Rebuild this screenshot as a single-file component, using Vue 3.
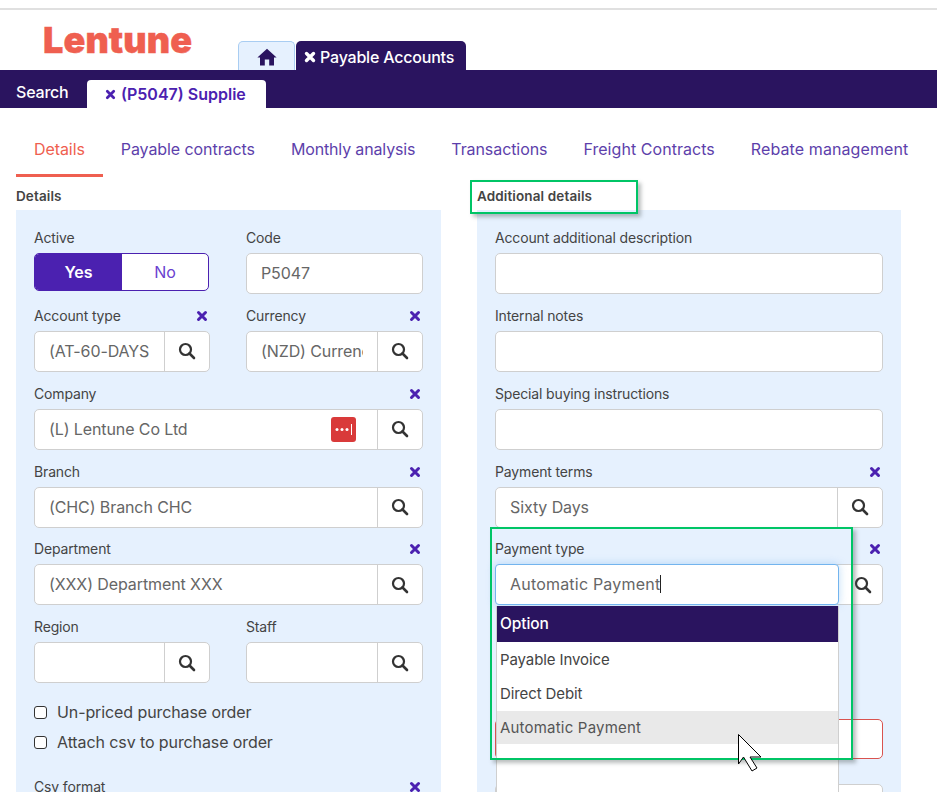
<script setup>
const navTabs = ['Details', 'Payable contracts', 'Monthly analysis', 'Transactions', 'Freight Contracts', 'Rebate management']
const rightRows = [
  { label: 'Account additional description' },
  { label: 'Internal notes' },
  { label: 'Special buying instructions' }
]
</script>

<template>
  <div class="page">
    <div class="topline"></div>
    <header class="brand">
      <div class="logo">Lentune</div>
      <div class="apptabs">
        <div class="hometab">
          <svg width="20" height="18" viewBox="0 0 20 18"><path fill="#2a145f" d="M10 .8 19.6 9.6H17V17.4H12.2V11.6H7.8V17.4H3V9.6H.4Z"/></svg>
        </div>
        <div class="apptab">
          <svg class="x" width="12" height="12" viewBox="0 0 12 12"><path d="M2.500 2.500 9.500 9.500M9.500 2.500 2.500 9.500" stroke="#fff" stroke-width="3.400" stroke-linecap="round"/></svg>
          <span>Payable Accounts</span>
        </div>
      </div>
    </header>
    <div class="subbar">
      <div class="search">Search</div>
      <div class="subtab">
        <svg class="x" width="11" height="11" viewBox="0 0 12 12"><path d="M2.500 2.500 9.500 9.500M9.500 2.500 2.500 9.500" stroke="#4b21b0" stroke-width="3" stroke-linecap="round"/></svg>
        <span>(P5047) Supplie</span>
      </div>
    </div>
    <nav class="nav">
      <div v-for="(t, i) in navTabs" :key="t" class="navitem" :class="{ on: i === 0 }">{{ t }}</div>
    </nav>

    <div class="cols">
      <section class="col">
        <h3 class="heading">Details</h3>
        <div class="panel">
          <div class="two">
            <div class="field">
              <div class="label">Active</div>
              <div class="toggle"><div class="yes">Yes</div><div class="no">No</div></div>
            </div>
            <div class="field">
              <div class="label">Code</div>
              <div class="grp"><div class="val">P5047</div></div>
            </div>
            <div class="field">
              <div class="label"><span>Account type</span><svg class="clr" width="12" height="12" viewBox="0 0 12 12"><path d="M2.500 2.500 9.500 9.500M9.500 2.500 2.500 9.500" stroke="#4b21b0" stroke-width="3" stroke-linecap="round"/></svg></div>
              <div class="grp"><div class="val">(AT-60-DAYS Days</div><div class="btn"><svg width="18" height="18" viewBox="0 0 18 18"><circle cx="7.500" cy="7.500" r="5.500" fill="none" stroke="#333" stroke-width="2.200"/><path d="M11.500 11.500 16 16" stroke="#333" stroke-width="2.600" stroke-linecap="round"/></svg></div></div>
            </div>
            <div class="field">
              <div class="label"><span>Currency</span><svg class="clr" width="12" height="12" viewBox="0 0 12 12"><path d="M2.500 2.500 9.500 9.500M9.500 2.500 2.500 9.500" stroke="#4b21b0" stroke-width="3" stroke-linecap="round"/></svg></div>
              <div class="grp"><div class="val">(NZD) Currency</div><div class="btn"><svg width="18" height="18" viewBox="0 0 18 18"><circle cx="7.500" cy="7.500" r="5.500" fill="none" stroke="#333" stroke-width="2.200"/><path d="M11.500 11.500 16 16" stroke="#333" stroke-width="2.600" stroke-linecap="round"/></svg></div></div>
            </div>
          </div>
          <div class="field">
            <div class="label"><span>Company</span><svg class="clr" width="12" height="12" viewBox="0 0 12 12"><path d="M2.500 2.500 9.500 9.500M9.500 2.500 2.500 9.500" stroke="#4b21b0" stroke-width="3" stroke-linecap="round"/></svg></div>
            <div class="grp">
              <div class="val">(L) Lentune Co Ltd</div>
              <svg class="pm" width="25" height="25" viewBox="0 0 25 25"><rect width="25" height="25" rx="3" fill="#d93a3a"/><circle cx="6" cy="12.500" r="1.500" fill="#fff"/><circle cx="11" cy="12.500" r="1.500" fill="#fff"/><circle cx="16" cy="12.500" r="1.500" fill="#fff"/><rect x="20" y="7" width="1" height="11" fill="#fff"/></svg>
              <div class="btn"><svg width="18" height="18" viewBox="0 0 18 18"><circle cx="7.500" cy="7.500" r="5.500" fill="none" stroke="#333" stroke-width="2.200"/><path d="M11.500 11.500 16 16" stroke="#333" stroke-width="2.600" stroke-linecap="round"/></svg></div>
            </div>
          </div>
          <div class="field">
            <div class="label"><span>Branch</span><svg class="clr" width="12" height="12" viewBox="0 0 12 12"><path d="M2.500 2.500 9.500 9.500M9.500 2.500 2.500 9.500" stroke="#4b21b0" stroke-width="3" stroke-linecap="round"/></svg></div>
            <div class="grp"><div class="val">(CHC) Branch CHC</div><div class="btn"><svg width="18" height="18" viewBox="0 0 18 18"><circle cx="7.500" cy="7.500" r="5.500" fill="none" stroke="#333" stroke-width="2.200"/><path d="M11.500 11.500 16 16" stroke="#333" stroke-width="2.600" stroke-linecap="round"/></svg></div></div>
          </div>
          <div class="field">
            <div class="label"><span>Department</span><svg class="clr" width="12" height="12" viewBox="0 0 12 12"><path d="M2.500 2.500 9.500 9.500M9.500 2.500 2.500 9.500" stroke="#4b21b0" stroke-width="3" stroke-linecap="round"/></svg></div>
            <div class="grp"><div class="val">(XXX) Department XXX</div><div class="btn"><svg width="18" height="18" viewBox="0 0 18 18"><circle cx="7.500" cy="7.500" r="5.500" fill="none" stroke="#333" stroke-width="2.200"/><path d="M11.500 11.500 16 16" stroke="#333" stroke-width="2.600" stroke-linecap="round"/></svg></div></div>
          </div>
          <div class="two">
            <div class="field">
              <div class="label">Region</div>
              <div class="grp"><div class="val"></div><div class="btn"><svg width="18" height="18" viewBox="0 0 18 18"><circle cx="7.500" cy="7.500" r="5.500" fill="none" stroke="#333" stroke-width="2.200"/><path d="M11.500 11.500 16 16" stroke="#333" stroke-width="2.600" stroke-linecap="round"/></svg></div></div>
            </div>
            <div class="field">
              <div class="label">Staff</div>
              <div class="grp"><div class="val"></div><div class="btn"><svg width="18" height="18" viewBox="0 0 18 18"><circle cx="7.500" cy="7.500" r="5.500" fill="none" stroke="#333" stroke-width="2.200"/><path d="M11.500 11.500 16 16" stroke="#333" stroke-width="2.600" stroke-linecap="round"/></svg></div></div>
            </div>
          </div>
          <div class="check"><span class="box"></span>Un-priced purchase order</div>
          <div class="check"><span class="box"></span>Attach csv to purchase order</div>
          <div class="field csv">
            <div class="label"><span>Csv format</span><svg class="clr" width="12" height="12" viewBox="0 0 12 12"><path d="M2.500 2.500 9.500 9.500M9.500 2.500 2.500 9.500" stroke="#4b21b0" stroke-width="3" stroke-linecap="round"/></svg></div>
          </div>
        </div>
      </section>

      <section class="col">
        <h3 class="heading">Additional details</h3>
        <div class="panel">
          <div v-for="r in rightRows" :key="r.label" class="field">
            <div class="label">{{ r.label }}</div>
            <div class="grp"><div class="val"></div></div>
          </div>
          <div class="field">
            <div class="label"><span>Payment terms</span><svg class="clr" width="12" height="12" viewBox="0 0 12 12"><path d="M2.500 2.500 9.500 9.500M9.500 2.500 2.500 9.500" stroke="#4b21b0" stroke-width="3" stroke-linecap="round"/></svg></div>
            <div class="grp"><div class="val">Sixty Days</div><div class="btn"><svg width="18" height="18" viewBox="0 0 18 18"><circle cx="7.500" cy="7.500" r="5.500" fill="none" stroke="#333" stroke-width="2.200"/><path d="M11.500 11.500 16 16" stroke="#333" stroke-width="2.600" stroke-linecap="round"/></svg></div></div>
          </div>
          <div class="field paytype">
            <div class="label"><span>Payment type</span><svg class="clr" width="12" height="12" viewBox="0 0 12 12"><path d="M2.500 2.500 9.500 9.500M9.500 2.500 2.500 9.500" stroke="#4b21b0" stroke-width="3" stroke-linecap="round"/></svg></div>
            <div class="grp">
              <div class="val focus">Automatic Payment<i class="caret"></i></div>
              <div class="btn plain"><svg width="18" height="18" viewBox="0 0 18 18"><circle cx="7.500" cy="7.500" r="5.500" fill="none" stroke="#333" stroke-width="2.200"/><path d="M11.500 11.500 16 16" stroke="#333" stroke-width="2.600" stroke-linecap="round"/></svg></div>
              <div class="menu">
                <div class="mhead">Option</div>
                <div class="mitem">Payable Invoice</div>
                <div class="mitem">Direct Debit</div>
                <div class="mitem hover">Automatic Payment</div>
              </div>
            </div>
          </div>
          <div class="grp red"><div class="val"></div></div>
          <div class="grp after"><div class="val"></div></div>
        </div>
      </section>
    </div>

    <div class="mark m1"></div>
    <div class="mark m2"></div>
    <svg class="cursor" width="26" height="40" viewBox="0 0 26 40"><path d="M.5.500V30L5.500 23 14 37 19 34 12 23H23Z" fill="#fff" stroke="#000" stroke-width="1"/></svg>
  </div>
</template>

<style>
html, body { margin: 0; overflow: hidden; background: #fff; }
</style>

<style scoped>
.page {
  position: relative;
  width: 937px;
  height: 792px;
  overflow: hidden;
  background: #fff;
  font-family: Inter, "Noto Sans", sans-serif;
  font-size: 16px;
  color: #444;
}
.topline { height: 2px; margin-top: 8px; background: #e0e0e0; }
.brand { display: flex; height: 60px; }
.logo {
  width: 238px;
  box-sizing: border-box;
  padding: 12px 0 0 43px;
  font-weight: 900;
  font-size: 36px;
  line-height: 36px;
  letter-spacing: 0.1px;
  color: #ef5f50;
  -webkit-text-stroke: 0.4px #ef5f50;
}
.apptabs { display: flex; align-items: flex-end; gap: 1px; }
.hometab {
  box-sizing: border-box;
  width: 57px;
  height: 29px;
  display: flex;
  align-items: center;
  justify-content: center;
  padding-top: 2px;
  background: #e6f1fe;
  border: 1px solid #a9cdf2;
  border-bottom: 0;
  border-radius: 5px 5px 0 0;
}
.apptab {
  box-sizing: border-box;
  width: 170px;
  height: 29px;
  display: flex;
  align-items: center;
  gap: 4px;
  padding: 2px 0 0 8px;
  background: #2a145f;
  color: #fff;
  border-radius: 5px 5px 0 0;
  font-weight: 500;
  letter-spacing: -0.2px;
}
.subbar {
  height: 38px;
  display: flex;
  align-items: flex-end;
  background: #2a145f;
}
.search { width: 87px; box-sizing: border-box; padding: 0 0 4px 16px; color: #fff; line-height: 24px; font-weight: 500; letter-spacing: -0.2px; }
.subtab {
  box-sizing: border-box;
  width: 179px;
  height: 28px;
  display: flex;
  align-items: center;
  gap: 5px;
  padding-left: 18px;
  background: #fff;
  color: #4b21b0;
  border-radius: 4px 4px 0 0;
  font-weight: 600;
}
.x { flex: none; }
.nav { display: flex; padding: 24px 0 0 16px; }
.navitem {
  padding: 0 18px;
  height: 45px;
  line-height: 35px;
  box-sizing: border-box;
  color: #5d3fab;
  letter-spacing: -0.08px;
  white-space: nowrap;
}
.navitem:nth-child(3) { letter-spacing: -0.15px; }
.navitem:nth-child(5) { letter-spacing: 0.05px; }
.navitem:nth-child(6) { letter-spacing: 0.1px; }
.navitem.on { color: #ef5f50; border-bottom: 3px solid #ef5f50; }
.cols { display: grid; grid-template-columns: 425px 424px; column-gap: 36px; padding: 0 0 0 16px; }
.heading { margin: 0; height: 33px; line-height: 38px; font-size: 13.500px; font-weight: 600; color: #444; letter-spacing: 0.12px; }
.panel { background: #e6f1fe; padding: 20px 18px 0; height: 600px; box-sizing: border-box; }
.two { display: grid; grid-template-columns: 176px 177px; column-gap: 36px; }
.field { height: 77.850px; }
.label {
  height: 23px;
  line-height: 16px;
  font-size: 14px;
  color: #444;
  display: flex;
  justify-content: space-between;
  align-items: flex-start;
  letter-spacing: -0.15px;
}
.clr { margin: 2px 2px 0 0; flex: none; }
.grp {
  box-sizing: border-box;
  position: relative;
  display: flex;
  height: 41px;
  background: #fff;
  border: 1px solid #cfcfcf;
  border-radius: 5px;
}
.val {
  flex: 1;
  min-width: 0;
  margin: 0 14px;
  line-height: 39px;
  color: #666;
  white-space: nowrap;
  overflow: hidden;
  letter-spacing: -0.1px;
}
.btn {
  flex: none;
  width: 45px;
  display: flex;
  align-items: center;
  justify-content: center;
  border-left: 1px solid #cfcfcf;
  box-sizing: border-box;
}
.btn.plain { border-left: 0; margin-left: 1px; }
.pm { flex: none; align-self: center; margin-right: 21px; }
.toggle {
  box-sizing: border-box;
  display: flex;
  width: 175px;
  height: 38px;
  border: 1px solid #4b21b0;
  border-radius: 5px;
  background: #fff;
  overflow: hidden;
  line-height: 36px;
  text-align: center;
}
.yes { width: 87px; background: #4b21b0; color: #fff; font-weight: 600; }
.no { flex: 1; color: #6a3fd0; }
.check {
  display: flex;
  align-items: center;
  gap: 10px;
  height: 30px;
  font-size: 16px;
  color: #444;
  letter-spacing: -0.1px;
}
.box { box-sizing: border-box; width: 13px; height: 13px; border: 1.500px solid #333; border-radius: 3px; background: #fff; }
.csv { margin-top: 22px; }
.paytype .grp { z-index: 2; }
.paytype .focus {
  flex: none;
  width: 344px;
  box-sizing: border-box;
  height: 41px;
  margin: -1px 0 0 -1px;
  padding: 0 14px;
  background: #fff;
  border: 1px solid #73b4ee;
  border-radius: 4px;
  box-shadow: 0 0 8px rgba(115, 180, 238, .45);
  position: relative;
  letter-spacing: .2px;
}
.caret { display: inline-block; width: 1px; height: 18px; background: #222; vertical-align: -3px; }
.menu {
  position: absolute;
  left: 0;
  top: 41px;
  box-sizing: border-box;
  width: 343px;
  height: 260px;
  background: #fff;
  border-left: 1px solid #cfcfcf;
  border-right: 1px solid #cfcfcf;
  font-size: 15px;
}
.mhead { height: 36px; line-height: 36px; background: #2a145f; color: #fff; padding-left: 3px; font-size: 15.500px; font-weight: 500; letter-spacing: -0.1px; }
.mitem { height: 33.600px; line-height: 33.600px; padding-left: 3px; color: #444; letter-spacing: -0.1px; }
.mhead + .mitem { margin-top: 1px; }
.mitem.hover { background: #e9e9e9; color: #555; letter-spacing: .2px; }
.red { margin-top: 100px; border-color: #d9534f; height: 40px; }
.after { margin-top: 25px; }
.mark {
  position: absolute;
  box-sizing: border-box;
  border: 2px solid #00c566;
  box-shadow: 3px 3px 4px rgba(80, 90, 90, .4);
  pointer-events: none;
}
.m1 { left: 470px; top: 180px; width: 168px; height: 34px; }
.m2 { left: 490px; top: 527px; width: 363px; height: 233px; z-index: 3; }
.cursor { position: absolute; left: 738px; top: 734px; z-index: 4; }
</style>
